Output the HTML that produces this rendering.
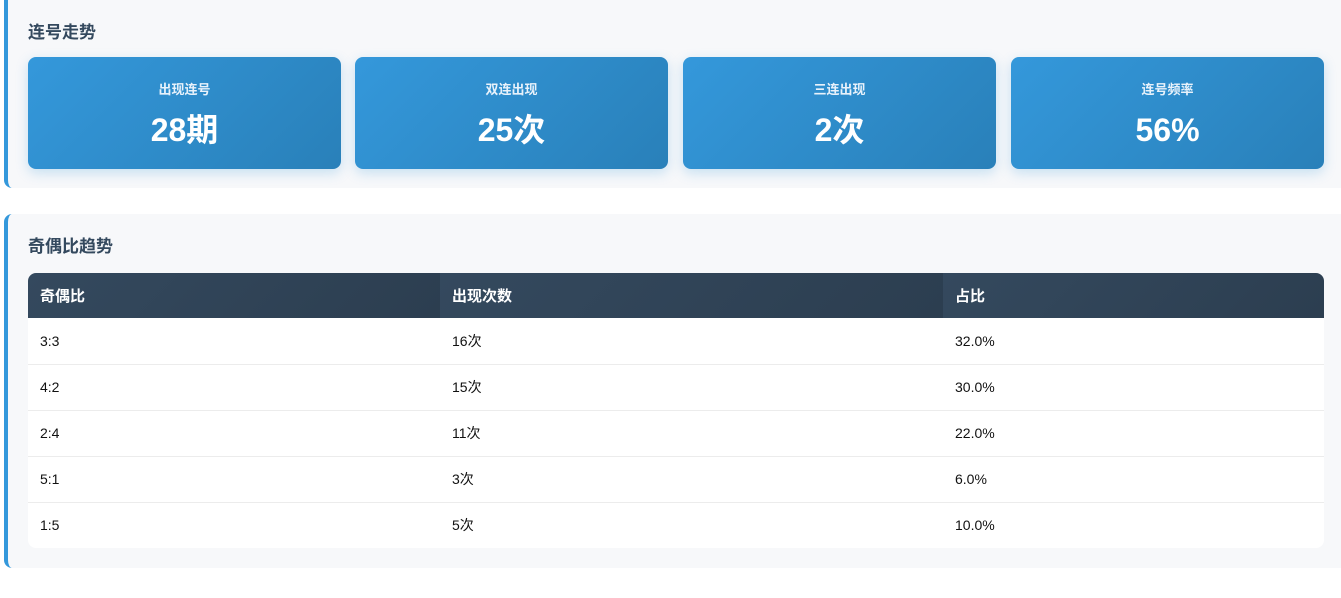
<!DOCTYPE html><html><head><meta charset="utf-8"><style>
*{box-sizing:border-box;margin:0;padding:0}
body{width:1341px;height:598px;background:#fff;font-family:"Liberation Sans","Noto Sans CJK SC",sans-serif;position:relative;overflow:hidden}
.sec{position:absolute;left:4px;width:1337px;background:#f7f8fa;border-left:4px solid #3498db;border-radius:8px 0 0 8px}
h3{position:absolute;left:20px;font-size:17px;font-weight:bold;color:#34495e}
.card{position:absolute;top:67px;width:313px;height:112px;border-radius:8px;background:linear-gradient(135deg,#3498db,#2980b9);box-shadow:0 4px 12px rgba(52,152,219,.25);color:#fff;text-align:center}
.card .l{position:absolute;top:22px;width:100%;font-size:13px;font-weight:bold;color:#e8f2fb}
.card .v{position:absolute;top:53px;width:100%;font-size:32px;font-weight:bold;line-height:40px}
table{position:absolute;left:20px;top:59px;width:1296px;border-collapse:collapse;background:#fff;border-radius:8px;overflow:hidden}
th{height:45px;text-align:left;padding-left:12px;color:#fff;font-size:15px;background:linear-gradient(135deg,#34495e,#2c3e50)}
td{height:46px;padding-left:12px;font-size:14px;color:#111;border-bottom:1px solid #ececec}
</style></head><body>
<div class="sec" style="top:-10px;height:198px">
<h3 style="top:28px">连号走势</h3>
<div class="card" style="left:20px"><div class="l">出现连号</div><div class="v">28期</div></div>
<div class="card" style="left:347px"><div class="l">双连出现</div><div class="v">25次</div></div>
<div class="card" style="left:675px"><div class="l">三连出现</div><div class="v">2次</div></div>
<div class="card" style="left:1003px"><div class="l">连号频率</div><div class="v">56%</div></div>
</div>
<div class="sec" style="top:214px;height:354px">
<h3 style="top:18px">奇偶比趋势</h3>
<table>
<tr><th style="width:412px">奇偶比</th><th style="width:503px">出现次数</th><th>占比</th></tr>
<tr><td>3:3</td><td>16次</td><td>32.0%</td></tr>
<tr><td>4:2</td><td>15次</td><td>30.0%</td></tr>
<tr><td>2:4</td><td>11次</td><td>22.0%</td></tr>
<tr><td>5:1</td><td>3次</td><td>6.0%</td></tr>
<tr><td style="border:0">1:5</td><td style="border:0">5次</td><td style="border:0">10.0%</td></tr>
</table>
</div>
</body></html>
